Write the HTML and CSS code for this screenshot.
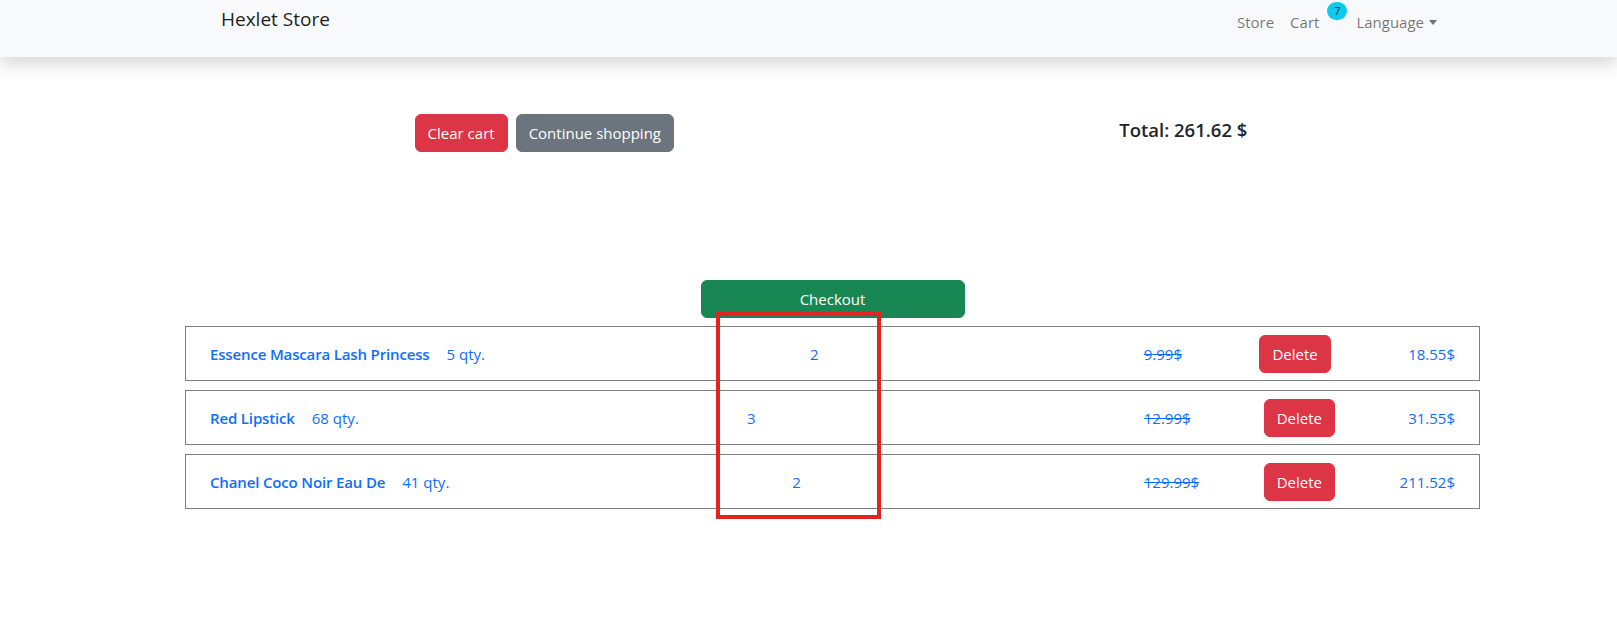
FILE: index.html
```html
<!DOCTYPE html>
<html lang="en">
<head>
<meta charset="utf-8">
<title>Hexlet Store</title>
<link rel="stylesheet" href="styles.css">
</head>
<body>
<header class="navbar">
  <div class="navbar-inner">
    <a class="brand" href="#">Hexlet Store</a>
    <nav class="nav">
      <a class="nav-link" href="#">Store</a>
      <a class="nav-link cart-link" href="#">Cart<span class="badge">7</span></a>
      <a class="nav-link dropdown" href="#">Language</a>
    </nav>
  </div>
</header>
<main class="main">
  <div class="summary">
    <div class="actions">
      <button class="btn btn-danger">Clear cart</button>
      <button class="btn btn-secondary">Continue shopping</button>
    </div>
    <h5 class="total">Total: 261.62 $</h5>
  </div>
  <section class="cart">
    <div class="checkout-wrap">
      <button class="btn btn-success checkout">Checkout</button>
    </div>
    <ul class="items">
      <li class="item">
        <div class="item-info"><a class="item-name" href="#">Essence Mascara Lash Princess</a><span class="item-stock">5 qty.</span></div>
        <span class="item-count">2</span>
        <div class="item-right"><span class="old-price">9.99$</span><button class="btn btn-danger">Delete</button><span class="price">18.55$</span></div>
      </li>
      <li class="item">
        <div class="item-info"><a class="item-name" href="#">Red Lipstick</a><span class="item-stock">68 qty.</span></div>
        <span class="item-count">3</span>
        <div class="item-right"><span class="old-price">12.99$</span><button class="btn btn-danger">Delete</button><span class="price">31.55$</span></div>
      </li>
      <li class="item">
        <div class="item-info"><a class="item-name" href="#">Chanel Coco Noir Eau De</a><span class="item-stock">41 qty.</span></div>
        <span class="item-count">2</span>
        <div class="item-right"><span class="old-price">129.99$</span><button class="btn btn-danger">Delete</button><span class="price">211.52$</span></div>
      </li>
    </ul>
    <div class="highlight"></div>
  </section>
</main>
</body>
</html>
```
FILE: styles.css
```css
* {
  box-sizing: border-box;
}

html {
  height: 100%;
}

body {
  margin: 0;
  min-height: 100%;
  font-family: "Open Sans", "Liberation Sans", sans-serif;
  font-size: 15px;
  line-height: 24px;
  color: #212529;
  background: #fff;
}

a {
  text-decoration: none;
}

.navbar {
  height: 57px;
  background: #f8f9fa;
  box-shadow: 0 8px 16px rgba(0, 0, 0, 0.15);
}

.navbar-inner {
  display: flex;
  justify-content: space-between;
  align-items: flex-start;
  padding: 0 172px 0 221px;
}

.brand {
  margin-top: 5px;
  font-size: 19px;
  line-height: 28px;
  color: rgba(0, 0, 0, 0.9);
}

.nav {
  display: flex;
  margin-top: 10px;
}

.nav-link {
  display: block;
  padding: 0 8px;
  color: rgba(0, 0, 0, 0.55);
}

.cart-link {
  position: relative;
  padding-right: 29px;
}

.badge {
  position: absolute;
  top: -8px;
  right: 1px;
  width: 20px;
  height: 18px;
  border-radius: 10px;
  background: #0dcaf0;
  color: #212529;
  font-size: 11px;
  line-height: 18px;
  text-align: center;
}

.dropdown::after {
  content: "";
  display: inline-block;
  margin-left: 5px;
  vertical-align: 3px;
  border-top: 5px solid;
  border-left: 4.5px solid transparent;
  border-right: 4.5px solid transparent;
}

.main {
  width: 1295px;
  margin-left: 185px;
  padding-bottom: 40px;
}

.summary {
  display: flex;
  justify-content: space-around;
  align-items: center;
  margin-top: 57px;
  padding: 0 10px 0 7px;
}

.actions {
  display: flex;
  gap: 8px;
}

.btn {
  font-family: inherit;
  font-size: 15px;
  line-height: 24px;
  padding: 6px 12px;
  border: 1px solid transparent;
  border-radius: 6px;
  color: #fff;
  cursor: pointer;
}

.btn-danger {
  background: #dc3545;
  border-color: #dc3545;
}

.btn-secondary {
  background: #6c757d;
  border-color: #6c757d;
}

.btn-success {
  background: #198754;
  border-color: #198754;
}

.total {
  margin: 0 0 6px;
  font-size: 18.5px;
  font-weight: 600;
  line-height: 24px;
}

.cart {
  position: relative;
  margin-top: 128px;
}

.checkout-wrap {
  display: flex;
  justify-content: center;
}

.checkout {
  width: 264px;
}

.items {
  list-style: none;
  margin: 8px 0 0;
  padding: 0;
  display: flex;
  flex-direction: column;
  gap: 9px;
}

.item {
  display: flex;
  justify-content: space-between;
  align-items: center;
  height: 55px;
  padding: 0 24px;
  border: 1px solid #808080;
  color: #0d6efd;
}

.item-info {
  display: flex;
  gap: 17px;
}

.item-name {
  color: #0d6efd;
  font-weight: 600;
  letter-spacing: -0.15px;
}

.item-right {
  width: 25%;
  display: flex;
  justify-content: space-between;
  align-items: center;
}

.old-price {
  text-decoration: line-through;
}

.highlight {
  position: absolute;
  left: 531px;
  top: 32px;
  width: 165px;
  height: 207px;
  border: 4px solid #e3231f;
}
```
